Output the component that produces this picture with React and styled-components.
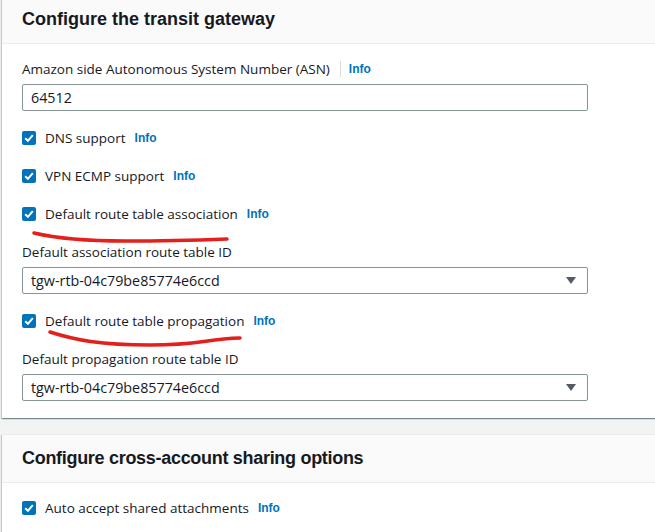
import React from 'react';
import styled, { createGlobalStyle } from 'styled-components';

const GlobalStyle = createGlobalStyle`
  html, body {
    margin: 0;
    padding: 0;
    background: #f2f3f3;
    overflow: hidden;
  }
  body {
    font-family: 'Open Sans', 'Liberation Sans', Arial, sans-serif;
    color: #16191f;
  }
`;

function CheckIcon() {
  return (
    <svg width="14" height="14" viewBox="0 0 14 14">
      <rect width="14" height="14" rx="2" fill="#0073bb" />
      <path d="M3.2 7.2 L5.9 9.8 L10.8 4.2" fill="none" stroke="#fff" strokeWidth="2" />
    </svg>
  );
}

function CheckRow({ label }) {
  return (
    <CheckLine>
      <Box>
        <CheckIcon />
      </Box>
      <CheckText>{label}</CheckText>
      <InfoLink>Info</InfoLink>
    </CheckLine>
  );
}

function SelectField({ label, value }) {
  return (
    <Field>
      <Label>{label}</Label>
      <SelectBox>
        <span>{value}</span>
        <Caret />
      </SelectBox>
    </Field>
  );
}

function App() {
  return (
    <>
      <GlobalStyle />
      <Page>
        <Panel>
          <Header>
            <Title>Configure the transit gateway</Title>
          </Header>
          <Body>
            <Field>
              <Label>
                Amazon side Autonomous System Number (ASN)
                <Divider />
                <InfoLink>Info</InfoLink>
              </Label>
              <TextInput defaultValue="64512" />
            </Field>
            <CheckRow label="DNS support" />
            <CheckRow label="VPN ECMP support" />
            <CheckRow label="Default route table association" />
            <SelectField label="Default association route table ID" value="tgw-rtb-04c79be85774e6ccd" />
            <CheckRow label="Default route table propagation" />
            <SelectField label="Default propagation route table ID" value="tgw-rtb-04c79be85774e6ccd" />
          </Body>
        </Panel>
        <Panel>
          <Header>
            <Title narrow>Configure cross-account sharing options</Title>
          </Header>
          <Body>
            <CheckRow label="Auto accept shared attachments" />
          </Body>
        </Panel>
      </Page>
      <Annotations width="655" height="532" viewBox="0 0 655 532">
        <path
          d="M34 233 C 55 238, 80 241, 125 241 S 200 240, 227 239"
          fill="none"
          stroke="#e3201b"
          strokeWidth="3.5"
          strokeLinecap="round"
        />
        <path
          d="M50 332 C 75 340, 100 345, 150 345 S 205 339, 240 338"
          fill="none"
          stroke="#e3201b"
          strokeWidth="3.5"
          strokeLinecap="round"
        />
      </Annotations>
    </>
  );
}

export default App;

const Page = styled.div`
  margin-top: -5px;
  padding-left: 2px;
  display: flex;
  flex-direction: column;
  gap: 16px;
`;

const Panel = styled.section`
  width: 720px;
  background: #ffffff;
  border-top: 1px solid #eaeded;
  box-shadow: 0 1px 1px 0 rgba(0, 28, 36, 0.3), 1px 1px 1px 0 rgba(0, 28, 36, 0.15),
    -1px 1px 1px 0 rgba(0, 28, 36, 0.15);
`;

const Header = styled.div`
  background: #fafafa;
  border-bottom: 1px solid #eaeded;
  padding: 12px 20px 13px;
`;

const Title = styled.h2`
  margin: 0;
  font-family: 'Liberation Sans', Arial, sans-serif;
  font-size: 18px;
  line-height: 22px;
  font-weight: 700;
  letter-spacing: ${(p) => (p.narrow ? '-0.3px' : '0')};
  color: #16191f;
`;

const Body = styled.div`
  display: flex;
  flex-direction: column;
  gap: 16px;
  padding: 14px 20px 17px;
`;

const Field = styled.div`
  display: flex;
  flex-direction: column;
  gap: 4px;
  width: 566px;
`;

const Label = styled.label`
  display: flex;
  align-items: center;
  font-size: 13.5px;
  line-height: 22px;
  color: #16191f;
`;

const Divider = styled.span`
  width: 1px;
  height: 16px;
  background: #d5dbdb;
  margin: 0 8px 0 10px;
`;

const InfoLink = styled.a`
  font-family: 'Liberation Sans', Arial, sans-serif;
  font-size: 12px;
  font-weight: 700;
  color: #0073bb;
  cursor: pointer;
`;

const controlBase = `
  box-sizing: border-box;
  width: 566px;
  height: 27px;
  border: 1px solid #879596;
  border-radius: 2px;
  background: #ffffff;
  padding: 0 8px;
  font-family: 'Open Sans', 'Liberation Sans', Arial, sans-serif;
  font-size: 14.3px;
  color: #16191f;
`;

const TextInput = styled.input`
  ${controlBase}
  outline: none;
`;

const SelectBox = styled.div`
  ${controlBase}
  display: flex;
  align-items: center;
  justify-content: space-between;
  padding-right: 11px;
`;

const Caret = styled.span`
  width: 0;
  height: 0;
  border-left: 5px solid transparent;
  border-right: 5px solid transparent;
  border-top: 7px solid #545b64;
`;

const CheckLine = styled.div`
  display: flex;
  align-items: center;
  height: 22px;
`;

const Box = styled.span`
  display: flex;
  width: 14px;
  height: 14px;
  margin-right: 9px;
`;

const CheckText = styled.span`
  font-size: 13.5px;
  line-height: 22px;
  margin-right: 9px;
`;

const Annotations = styled.svg`
  position: absolute;
  top: 0;
  left: 0;
  pointer-events: none;
`;
